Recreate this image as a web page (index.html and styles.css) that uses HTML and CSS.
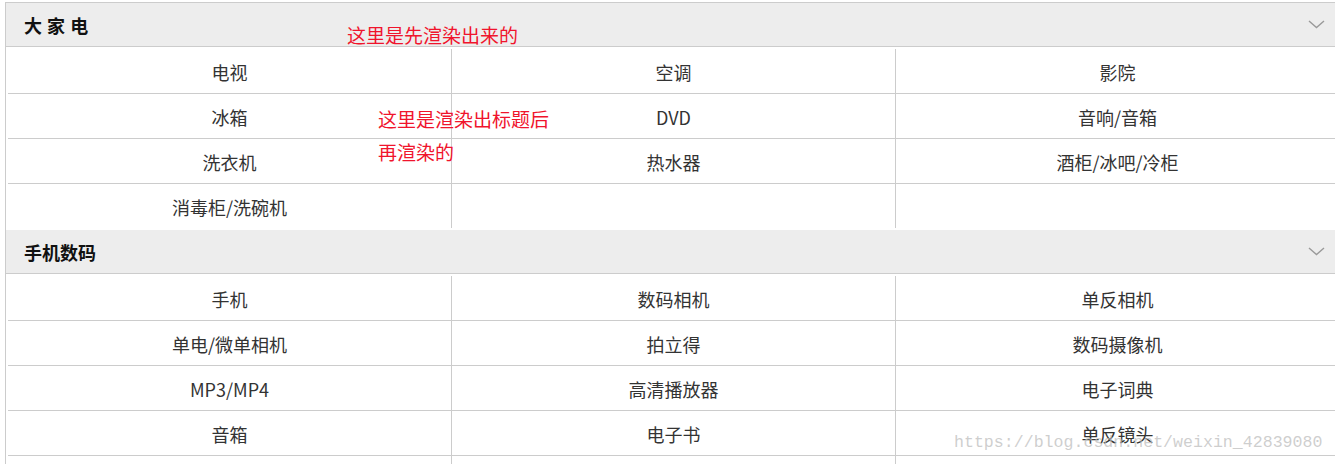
FILE: index.html
```html
<!DOCTYPE html>
<html lang="zh-CN">
<head>
<meta charset="utf-8">
<title>分类</title>
<link rel="stylesheet" href="styles.css">
</head>
<body>
<div class="panel">
  <section class="cat">
    <div class="cat-head">
      <span class="cat-title">大 家 电</span>
      <svg class="chev" width="17" height="9" viewBox="0 0 17 9"><polyline points="1,1 8.5,7.5 16,1" fill="none" stroke="#9a9a9a" stroke-width="1.4"/></svg>
    </div>
    <ul class="grid">
      <li>电视</li><li>空调</li><li>影院</li>
      <li>冰箱</li><li>DVD</li><li>音响/音箱</li>
      <li>洗衣机</li><li>热水器</li><li>酒柜/冰吧/冷柜</li>
      <li>消毒柜/洗碗机</li><li></li><li></li>
    </ul>
  </section>
  <section class="cat">
    <div class="cat-head">
      <span class="cat-title">手机数码</span>
      <svg class="chev" width="17" height="9" viewBox="0 0 17 9"><polyline points="1,1 8.5,7.5 16,1" fill="none" stroke="#9a9a9a" stroke-width="1.4"/></svg>
    </div>
    <ul class="grid">
      <li>手机</li><li>数码相机</li><li>单反相机</li>
      <li>单电/微单相机</li><li>拍立得</li><li>数码摄像机</li>
      <li>MP3/MP4</li><li>高清播放器</li><li>电子词典</li>
      <li>音箱</li><li>电子书</li><li>单反镜头</li>
      <li></li><li></li><li></li>
    </ul>
  </section>
  <div class="note note-a">这里是先渲染出来的</div>
  <div class="note note-b">这里是渲染出标题后<br>再渲染的</div>
  <div class="watermark">https://blog.csdn.net/weixin_42839080</div>
</div>
</body>
</html>
```
FILE: styles.css
```css
html, body {
  margin: 0;
  padding: 0;
  background: #fff;
  overflow: hidden;
}
body {
  font-family: "Noto Sans CJK SC", "Noto Sans", sans-serif;
  color: #333;
}
.panel {
  position: relative;
  margin: 2px 0 0 5px;
  width: 1330px;
  border-left: 1px solid #cccccc;
  border-top: 1px solid #cccccc;
}
.cat-head {
  display: flex;
  align-items: center;
  justify-content: space-between;
  height: 43px;
  padding: 0 11px 0 18px;
  background: #ededed;
  border-bottom: 1px solid #cccccc;
}
.cat-title {
  font-size: 18px;
  font-weight: bold;
  color: #111;
  line-height: 1;
  padding-top: 1px;
  word-spacing: 1px;
}
.chev {
  display: block;
}
.grid {
  list-style: none;
  margin: 0;
  padding: 2px 0 2px 2px;
  display: grid;
  grid-template-columns: repeat(3, 444px);
  width: 1332px;
}
.grid li {
  height: 43px;
  padding-top: 1px;
  border-right: 1px solid #cccccc;
  border-bottom: 1px solid #cccccc;
  display: flex;
  align-items: center;
  justify-content: center;
  font-size: 18px;
  line-height: 1;
  color: #333;
}
.grid li:nth-last-child(-n+3) {
  border-bottom: none;
}
.note {
  position: absolute;
  color: #f0142c;
  font-size: 19px;
  line-height: 33px;
}
.note-a {
  left: 341px;
  top: 15px;
}
.note-b {
  left: 372px;
  top: 99px;
}
.watermark {
  position: absolute;
  left: 948px;
  top: 430px;
  font-family: "Liberation Mono", monospace;
  font-size: 16.6px;
  color: rgba(190, 190, 190, 0.75);
  white-space: nowrap;
}
```
